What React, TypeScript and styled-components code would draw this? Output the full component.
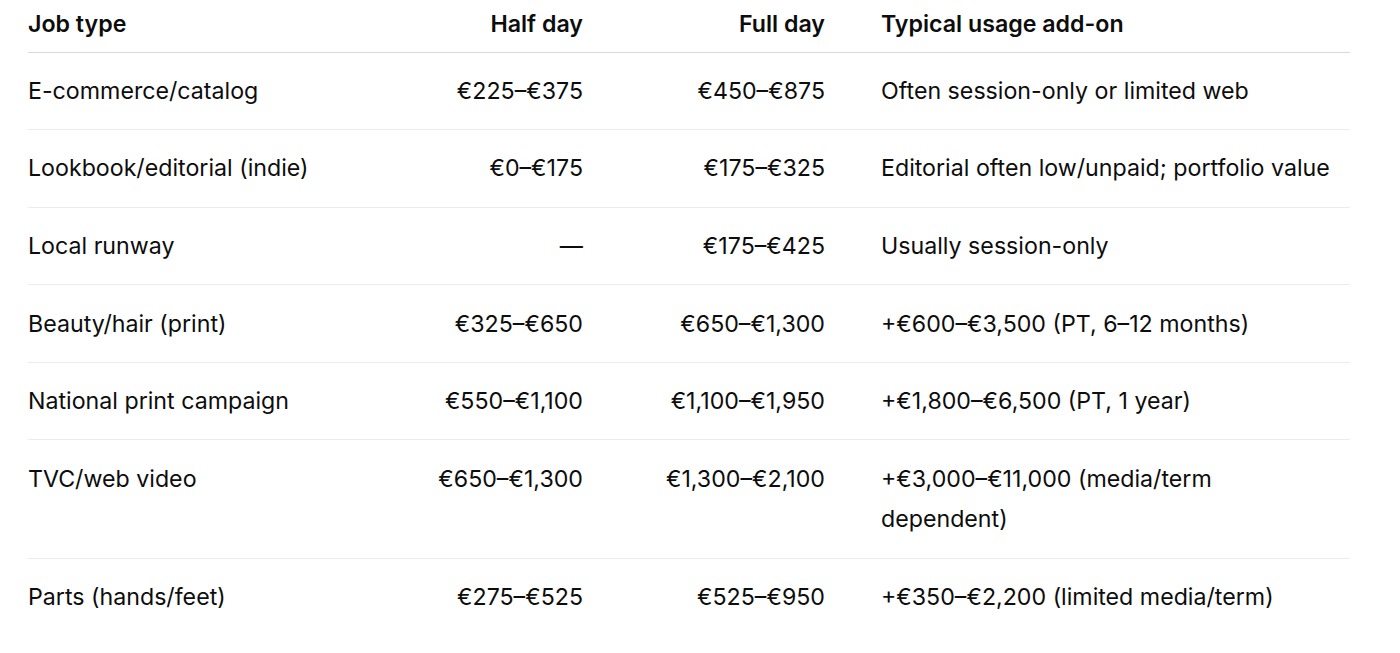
import React from "react";
import styled, { createGlobalStyle } from "styled-components";

const rows = [
  { job: "E-commerce/catalog", half: "€225–€375", full: "€450–€875", usage: "Often session-only or limited web" },
  { job: "Lookbook/editorial (indie)", half: "€0–€175", full: "€175–€325", usage: "Editorial often low/unpaid; portfolio value" },
  { job: "Local runway", half: "—", full: "€175–€425", usage: "Usually session-only" },
  { job: "Beauty/hair (print)", half: "€325–€650", full: "€650–€1,300", usage: "+€600–€3,500 (PT, 6–12 months)" },
  { job: "National print campaign", half: "€550–€1,100", full: "€1,100–€1,950", usage: "+€1,800–€6,500 (PT, 1 year)" },
  { job: "TVC/web video", half: "€650–€1,300", full: "€1,300–€2,100", usage: "+€3,000–€11,000 (media/term dependent)" },
  { job: "Parts (hands/feet)", half: "€275–€525", full: "€525–€950", usage: "+€350–€2,200 (limited media/term)" },
];

export default function App() {
  return (
    <>
      <GlobalStyle />
      <Page>
        <Table>
          <colgroup>
            <Col $w={330} />
            <Col $w={253} />
            <Col $w={242} />
            <Col $w={497} />
          </colgroup>
          <thead>
            <tr>
              <Head>Job type</Head>
              <Head $align="right">Half day</Head>
              <Head $align="right">Full day</Head>
              <Head>Typical usage add-on</Head>
            </tr>
          </thead>
          <tbody>
            {rows.map((r, i) => (
              <Row key={r.job} $last={i === rows.length - 1}>
                <Cell>{r.job}</Cell>
                <Cell $align="right">{r.half}</Cell>
                <Cell $align="right">{r.full}</Cell>
                <Cell>{r.usage}</Cell>
              </Row>
            ))}
          </tbody>
        </Table>
      </Page>
    </>
  );
}

const GlobalStyle = createGlobalStyle`
  body {
    margin: 0;
    background: #ffffff;
    color: #0d0d0d;
    font-family: Inter, "Noto Sans", "Liberation Sans", sans-serif;
  }
`;

const Page = styled.div`
  padding: 0 50px 0 28px;
`;

const Table = styled.table`
  width: 1322px;
  border-collapse: collapse;
  table-layout: fixed;
  font-size: 23.2px;
  line-height: 40.6px;
`;

const Col = styled.col<{ $w: number }>`
  width: ${(p) => p.$w}px;
`;

const Head = styled.th<{ $align?: string }>`
  text-align: ${(p) => p.$align || "left"};
  font-weight: 600;
  padding: 4px 28px 7px;
  border-bottom: 1px solid #d9d9d9;

  &:first-child {
    padding-left: 0;
  }
  &:last-child {
    padding-right: 12px;
  }
`;

const Row = styled.tr<{ $last?: boolean }>`
  border-bottom: ${(p) => (p.$last ? "none" : "1px solid #ececec")};
`;

const Cell = styled.td<{ $align?: string }>`
  text-align: ${(p) => p.$align || "left"};
  vertical-align: top;
  padding: 18.2px 28px 17.8px;
  font-weight: 400;

  &:first-child {
    padding-left: 0;
  }
  &:last-child {
    padding-right: 12px;
  }
`;
